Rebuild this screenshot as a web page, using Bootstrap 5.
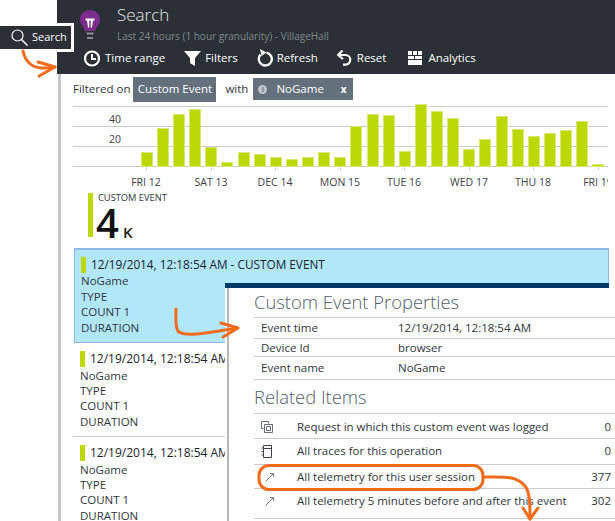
<!DOCTYPE html>
<html lang="en">
<head>
    <meta charset="UTF-8">
    <meta name="viewport" content="width=device-width, initial-scale=1.0">
    <title>Search</title>
    <link href="https://cdn.jsdelivr.net/npm/bootstrap@5.3.0/dist/css/bootstrap.min.css" rel="stylesheet">
    <style>
        html, body { margin: 0; background: #fff; }
        .shot { position: relative; width: 615px; height: 521px; overflow: hidden; font-family: "Open Sans", "Noto Sans", sans-serif; font-size: 12px; color: #30363c; }
        .gutter { width: 58px; flex: none; }
        .blade { flex: 1; min-width: 0; }
        .blade-head { height: 74px; background: #2a3035; margin-left: -1px; color: #fff; }
        .head-top { height: 44px; padding: 5px 0 0 21px; }
        .bulb { margin-top: 2px; }
        .head-text { margin-left: 15px; }
        .head-title { font-size: 17px; font-weight: 300; line-height: 20px; color: #e6e8ea; }
        .head-sub { font-size: 10px; line-height: 14px; margin-top: 4px; color: #83888c; }
        .tools { padding-left: 27px; height: 28px; gap: 19px; }
        .tool { display: flex; align-items: center; font-size: 11.5px; line-height: 16px; }
        .tool svg { display: block; margin-right: 4px; }
        .tool-wide svg { margin-right: 5px; }
        .tool-last { margin-left: 3px; }
        .tool-last svg { margin-right: 6px; }
        .blade-body { border-left: 3px solid #c4c6c8; height: 447px; padding-left: 12px; }
        .filter-row { height: 30px; font-size: 11.5px; }
        .chip { background: #64707c; color: #fff; display: flex; align-items: center; }
        .chip-a { width: 83px; height: 25px; justify-content: center; margin: 0 9px 0 3px; }
        .chip-b { width: 100px; height: 22px; margin-left: 5px; padding: 0 5px; }
        .chip-dot { width: 9px; height: 9px; border-radius: 50%; background: #c0c5ca; color: #64707c; margin-right: 9px; font-size: 7px; line-height: 9px; text-align: center; font-weight: 700; }
        .chip-x { margin-left: auto; margin-right: 2px; font-weight: 700; font-size: 10px; }
        .chart { display: block; }
        .chart text { font-family: "Open Sans", "Noto Sans", sans-serif; font-size: 10.5px; fill: #3a4046; }
        .metric { height: 60px; padding: 5px 0 0 15px; }
        .metric-bar { width: 5px; height: 44px; background: #bcd906; margin-right: 5px; }
        .metric-label { font-size: 9.3px; line-height: 10px; color: #30363c; }
        .metric-num { font-size: 40px; font-weight: 600; line-height: 32px; margin: 4px 0 0 -2px; color: #111; }
        .metric-unit { font-size: 15px; font-weight: 600; margin-left: 4px; color: #222; }
        .evt { line-height: 15.4px; font-size: 11.5px; }
        .evt-on { margin-left: 1px; width: 535px; height: 95px; line-height: 15.7px; background: #b0e8fa; border: 1px solid #8fb6e6; border-top-width: 2px; padding: 7px 0 0 6px; }
        .evt-plain { height: 94px; width: 152px; padding: 8px 0 0 7px; line-height: 15.2px; }
        .evt-line { border-bottom: 1px solid #c9cbcd; }
        .evt-head { height: 16px; font-size: 11.8px; color: #1c2228; white-space: nowrap; }
        .evt-plain .evt-head { font-size: 12px; margin-bottom: 1px; }
        .evt-mark { width: 5px; height: 16px; background: #bcd906; margin-right: 5px; flex: none; }
        .panel { position: absolute; left: 225px; top: 283px; right: 0; bottom: 0; background: #fff; }
        .panel-cap { width: 384px; height: 5px; background: #003a6b; }
        .panel-in { margin-left: 2px; border-left: 2px solid #b4b8bc; height: 233px; padding-left: 25px; }
        .panel-h { font-weight: 300; font-size: 18.4px; color: #52606c; display: flex; align-items: center; }
        .h-a { height: 29px; padding-bottom: 2px; }
        .h-b { height: 33px; }
        .rows { border-top: 1px solid #c9cbcd; font-size: 11.5px; }
        .line { display: flex; align-items: center; border-bottom: 1px solid #c9cbcd; padding-left: 7px; padding-right: 4px; white-space: nowrap; color: #30363c; }
        .prop-k { width: 137px; }
        .rel-ic { width: 36px; display: flex; }
        .rel-n { margin-left: auto; }
        .h21 { height: 21px; }
        .h18 { height: 18px; }
        .h23 { height: 23px; }
        .h25 { height: 25px; padding-top: 2px; }
        .h26 { height: 26px; padding-bottom: 1px; }
        .h24 { height: 24px; }
        .h30 { height: 30px; padding-bottom: 6px; }
        .tag { position: absolute; left: 0; top: 23px; width: 74px; height: 29px; background: #2a3035; border: solid #fff; border-width: 3px 3px 3px 0; color: #fff; font-size: 11px; font-weight: 500; display: flex; align-items: center; padding-left: 11px; }
        .tag svg { margin-right: 4px; }
        .marks { position: absolute; left: 0; top: 0; pointer-events: none; }
    </style>
</head>
<body>
<div class="shot d-flex">
    <div class="gutter"></div>
    <div class="blade">
        <div class="blade-head">
            <div class="head-top d-flex">
                <svg class="bulb flex-shrink-0" width="24" height="34" viewBox="0 0 24 34">
                    <path d="M12 3C6.500 3 2 7 2 12.500c0 3.500 2 5.500 3.500 8 .7 1.200 1 2.500 1 3.500h11c0-1 .3-2.300 1-3.500 1.500-2.500 3.500-4.500 3.500-8C22 7 17.500 3 12 3z" fill="#7b2d8e"/>
                    <path d="M7.500 11.500h9v2h-9zM9 13.500h2.300v7H10zM15 13.500h-2.300v7H14z" fill="#fff"/>
                    <path d="M8.500 25.500h7v2h-7zM9 30h6v2H9z" fill="#8c9094"/>
                </svg>
                <div class="head-text">
                    <div class="head-title">Search</div>
                    <div class="head-sub">Last 24 hours (1 hour granularity) - VillageHall</div>
                </div>
            </div>
            <div class="tools d-flex align-items-center">
                <div class="tool tool-wide">
                    <svg width="16" height="17" viewBox="0 0 16 17"><circle cx="8" cy="8.500" r="7" fill="none" stroke="#fff" stroke-width="2.200"/><path d="M8 4v5h4" fill="none" stroke="#fff" stroke-width="2"/></svg>
                    Time range
                </div>
                <div class="tool">
                    <svg width="17" height="16" viewBox="0 0 17 16"><path d="M0 1h17l-6 7v8l-5-3V8z" fill="#fff"/></svg>
                    Filters
                </div>
                <div class="tool">
                    <svg width="16" height="18" viewBox="0 0 16 18"><path d="M9.500 3.600a6.500 6.500 0 1 1-6 2" fill="none" stroke="#fff" stroke-width="2.300"/><path d="M3 0l1.500 7 5-3.500z" fill="#fff"/></svg>
                    Refresh
                </div>
                <div class="tool tool-wide">
                    <svg width="15" height="16" viewBox="0 0 15 16"><path d="M1.500 5H8.500a4.800 4.800 0 0 1 0 9.600H6" fill="none" stroke="#fff" stroke-width="2.200"/><path d="M5.500.500L1 5l5 4" fill="none" stroke="#fff" stroke-width="2.200"/></svg>
                    Reset
                </div>
                <div class="tool tool-last">
                    <svg width="14" height="14" viewBox="0 0 14 14"><path d="M0 0h4v4H0zM5 0h4v4H5zM10 0h4v4h-4zM0 5h6v3H0zM7 5h7v3H7zM0 9h14v5H0z" fill="#fff"/></svg>
                    Analytics
                </div>
            </div>
        </div>
        <div class="blade-body">
            <div class="filter-row d-flex align-items-center">
                <span>Filtered on</span>
                <div class="chip chip-a">Custom Event</div>
                <span>with</span>
                <div class="chip chip-b"><span class="chip-dot">i</span>NoGame<span class="chip-x">x</span></div>
            </div>
            <svg id="chart" class="chart" width="542" height="84" viewBox="73 104 542 84"></svg>
            <div class="metric d-flex">
                <div class="metric-bar"></div>
                <div>
                    <div class="metric-label">CUSTOM EVENT</div>
                    <div class="metric-num d-flex align-items-baseline">4<span class="metric-unit">K</span></div>
                </div>
            </div>
            <div class="evt evt-on">
                <div class="evt-head d-flex align-items-center"><span class="evt-mark"></span>12/19/2014, 12:18:54 AM - CUSTOM EVENT</div>
                <div>NoGame</div><div>TYPE</div><div>COUNT 1</div><div>DURATION</div>
            </div>
            <div class="evt evt-plain evt-line">
                <div class="evt-head d-flex align-items-center"><span class="evt-mark"></span>12/19/2014, 12:18:54 AM</div>
                <div>NoGame</div><div>TYPE</div><div>COUNT 1</div><div>DURATION</div>
            </div>
            <div class="evt evt-plain">
                <div class="evt-head d-flex align-items-center"><span class="evt-mark"></span>12/19/2014, 12:18:54 AM</div>
                <div>NoGame</div><div>TYPE</div><div>COUNT 1</div><div>DURATION</div>
            </div>
        </div>
    </div>

    <div class="panel">
        <div class="panel-cap"></div>
        <div class="panel-in">
            <div class="panel-h h-a">Custom Event Properties</div>
            <div class="rows">
                <div class="line h21"><span class="prop-k">Event time</span>12/19/2014, 12:18:54 AM</div>
                <div class="line h18"><span class="prop-k">Device Id</span>browser</div>
                <div class="line h23"><span class="prop-k">Event name</span>NoGame</div>
            </div>
            <div class="panel-h h-b">Related Items</div>
            <div class="rows">
                <div class="line h25">
                    <span class="rel-ic"><svg width="13" height="12" viewBox="0 0 13 12"><path d="M.5 7.500v-7h7v2M.5 7.500h2M3.500 3.500h8v8h-8zM5.500 5.500h4v4h-4z" fill="none" stroke="#6a6e72"/></svg></span>
                    Request in which this custom event was logged<span class="rel-n">0</span>
                </div>
                <div class="line h26">
                    <span class="rel-ic"><svg width="12" height="13" viewBox="0 0 12 13"><path d="M2.500.500h8v12h-8zM.5 3h2M.5 6.500h2M.5 10h2M2.500 3.500h8" fill="none" stroke="#3f4347"/></svg></span>
                    All traces for this operation<span class="rel-n">0</span>
                </div>
                <div class="line h24">
                    <span class="rel-ic"><svg class="ms-1" width="10" height="10" viewBox="0 0 10 10"><path d="M.5 9.500l8-8M5 1.500h3.500V5" fill="none" stroke="#747a80"/></svg></span>
                    All telemetry for this user session<span class="rel-n">377</span>
                </div>
                <div class="line h30">
                    <span class="rel-ic"><svg class="ms-1" width="10" height="10" viewBox="0 0 10 10"><path d="M.5 9.500l8-8M5 1.500h3.500V5" fill="none" stroke="#747a80"/></svg></span>
                    All telemetry 5 minutes before and after this event<span class="rel-n">302</span>
                </div>
            </div>
        </div>
    </div>

    <div class="tag">
        <svg width="17" height="17" viewBox="0 0 17 17"><circle cx="6.500" cy="6.500" r="5.500" fill="none" stroke="#fff" stroke-width="1.200"/><path d="M10.500 10.500l6 6" stroke="#fff" stroke-width="1.500"/></svg>
        Search
    </div>

    <svg class="marks" width="615" height="521" viewBox="0 0 615 521" fill="none" stroke="#f26a1b" stroke-width="3" stroke-linecap="round" stroke-linejoin="round">
        <path d="M23 51c2 10 9 17 19 17 5 0 9 0 13-1"/>
        <path d="M38 62l17 5-16 9"/>
        <path d="M176 309c0 10-1 18 2 22 5 6 25 3 59-3"/>
        <path d="M221 323l17 5-15 9"/>
        <rect x="259" y="465.500" width="224" height="24" rx="10"/>
        <path d="M483 477c18 0 33-2 42 9 5 6 5 18 5 33"/>
        <path d="M523 508l7 11 8-11"/>
    </svg>
</div>
<script>
    // bars: [left, top] read off the reference
    var bars = [[141,152],[157,128],[173,114],[189,109],[205,147],[221,162],[238,152],[254,154],[270,157],[286,159],[302,157],[318,152],[334,157],[350,126],[367,114],[383,115],[399,151],[415,104],[431,111],[447,118],[463,149],[479,139],[496,116],[512,129],[528,136],[544,133],[560,130],[576,121],[592,164]];
    var ticks = [[146,"FRI 12"],[211,"SAT 13"],[275,"DEC 14"],[340,"MON 15"],[404,"TUE 16"],[469,"WED 17"],[533,"THU 18"],[598,"FRI 19"]];
    var svg = "";
    [106,126,146,166].forEach(function (y) {
        svg += '<line x1="73" x2="608" y1="' + (y + .5) + '" y2="' + (y + .5) + '" stroke="#c9cbcd"/>';
    });
    bars.forEach(function (b) {
        svg += '<rect x="' + (b[0] + .5) + '" y="' + (b[1] + .5) + '" width="11" height="' + (166 - b[1]) + '" fill="#bcd906" stroke="#d9e873"/>';
    });
    ticks.forEach(function (t) {
        svg += '<line x1="' + (t[0] + .5) + '" x2="' + (t[0] + .5) + '" y1="167" y2="170" stroke="#c9cbcd"/>';
        svg += '<text x="' + t[0] + '" y="186" text-anchor="middle">' + t[1] + '</text>';
    });
    svg += '<text x="121" y="123" text-anchor="end">40</text><text x="121" y="143" text-anchor="end">20</text>';
    svg += '<rect x="608" y="104" width="7" height="84" fill="#fff"/>';
    document.getElementById("chart").innerHTML = svg;
</script>
<script src="https://cdn.jsdelivr.net/npm/bootstrap@5.3.0/dist/js/bootstrap.bundle.min.js"></script>
</body>
</html>
